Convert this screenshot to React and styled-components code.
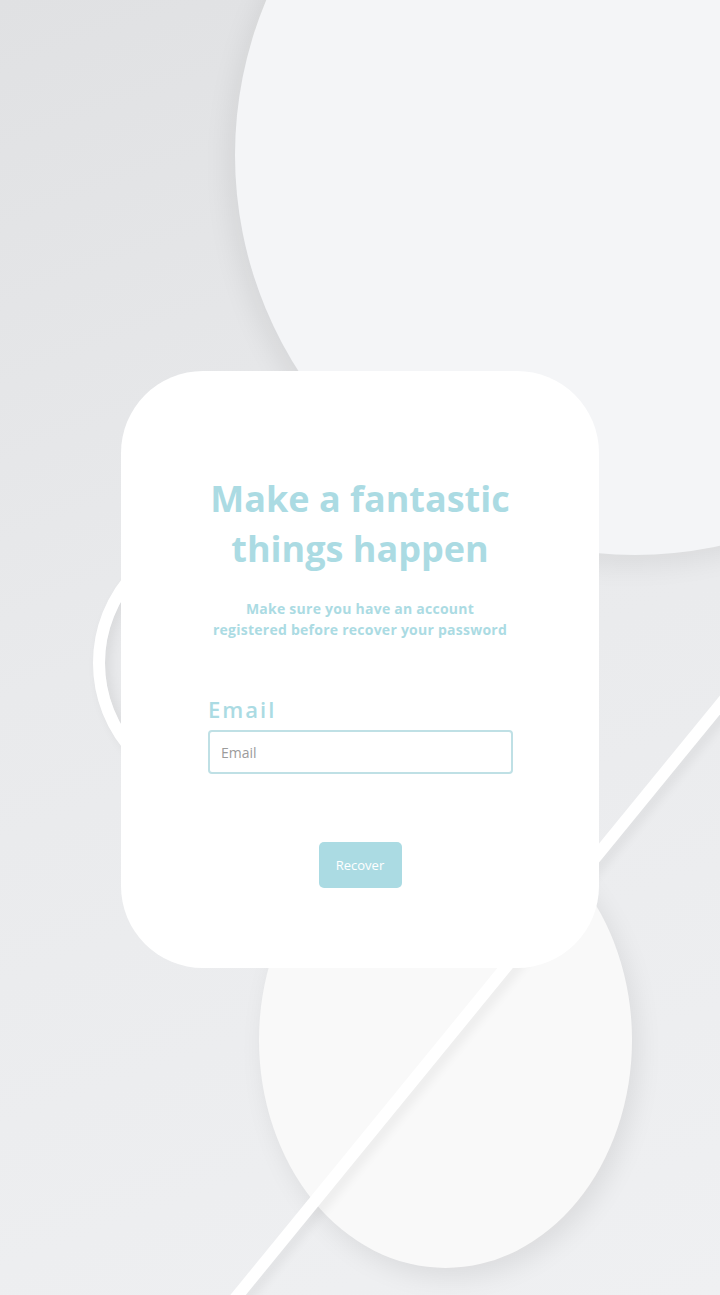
import React from 'react'
import styled, { createGlobalStyle } from 'styled-components'

const teal = '#abdbe3'

const GlobalStyle = createGlobalStyle`
  html, body {
    margin: 0;
    padding: 0;
  }
  body {
    font-family: 'Open Sans', 'Noto Sans', sans-serif;
    background: #eceef0;
  }
  * {
    box-sizing: border-box;
  }
`

const Page = styled.div`
  position: relative;
  width: 720px;
  height: 1295px;
  overflow: hidden;
  background: linear-gradient(160deg, #e0e1e3 0%, #e9eaec 45%, #eff0f2 100%);
  display: flex;
  flex-direction: column;
  align-items: center;
  padding-top: 371px;
`

// decorative shapes on the backdrop
const TopBlob = styled.div`
  position: absolute;
  left: 235px;
  top: -245px;
  width: 800px;
  height: 800px;
  border-radius: 50%;
  background: #f4f5f7;
  box-shadow: -6px 10px 28px rgba(0, 0, 0, 0.07);
`
const Ring = styled.div`
  position: absolute;
  left: 93px;
  top: 526px;
  width: 274px;
  height: 274px;
  border-radius: 50%;
  border: 12px solid #ffffff;
  box-shadow: inset 4px 2px 14px rgba(0, 0, 0, 0.08), 2px 4px 10px rgba(0, 0, 0, 0.04);
`
const BottomBlob = styled.div`
  position: absolute;
  left: 259px;
  top: 812px;
  width: 373px;
  height: 456px;
  border-radius: 50%;
  background: #f9f9f9;
  box-shadow: 6px 10px 26px rgba(0, 0, 0, 0.08);
`
const Slash = styled.div`
  position: absolute;
  left: 29px;
  top: 994px;
  width: 900px;
  height: 12px;
  background: #ffffff;
  transform: rotate(-50.76deg);
  box-shadow: 0 8px 10px rgba(0, 0, 0, 0.05);
`

const Card = styled.div`
  position: relative;
  z-index: 1;
  width: 478px;
  height: 597px;
  background: #ffffff;
  border-radius: 82px;
  display: flex;
  flex-direction: column;
  align-items: center;
  padding: 103px 86px 0;
`
const Title = styled.h1`
  margin: 0;
  font-family: 'Open Sans', sans-serif;
  font-weight: 700;
  font-size: 36px;
  line-height: 50px;
  color: ${teal};
  text-align: center;
  letter-spacing: 0;
`
const Subtitle = styled.p`
  margin: 24px 0 0;
  font-family: 'Open Sans', sans-serif;
  font-weight: 700;
  font-size: 14px;
  line-height: 21px;
  letter-spacing: 0.25px;
  color: ${teal};
  text-align: center;
`
const Field = styled.div`
  width: 100%;
  display: flex;
  flex-direction: column;
  margin-top: 54px;
  padding: 0 1px;
`
const Label = styled.label`
  font-family: 'Open Sans', sans-serif;
  font-weight: 600;
  font-size: 22px;
  line-height: 30px;
  letter-spacing: 2px;
  color: ${teal};
  margin-bottom: 6px;
`
const Input = styled.input`
  width: 305px;
  height: 44px;
  border: 2px solid #bfe0e5;
  border-radius: 4px;
  padding: 0 11px;
  font-family: 'Open Sans', sans-serif;
  font-size: 14px;
  color: #555;
  outline: none;
  &::placeholder {
    color: #9b9b9b;
  }
`
const Button = styled.button`
  margin-top: 68px;
  width: 83px;
  height: 46px;
  border: none;
  border-radius: 5px;
  background: ${teal};
  color: #ffffff;
  font-family: 'Open Sans', sans-serif;
  font-size: 13px;
  cursor: pointer;
`

const App = () => {
  return (
    <>
      <GlobalStyle />
      <Page>
        <TopBlob />
        <BottomBlob />
        <Ring />
        <Slash />
        <Card>
          <Title>
            Make a fantastic
            <br />
            things happen
          </Title>
          <Subtitle>
            Make sure you have an account
            <br />
            registered before recover your password
          </Subtitle>
          <Field>
            <Label htmlFor='email'>Email</Label>
            <Input id='email' type='email' placeholder='Email' />
          </Field>
          <Button>Recover</Button>
        </Card>
      </Page>
    </>
  )
}

export default App
